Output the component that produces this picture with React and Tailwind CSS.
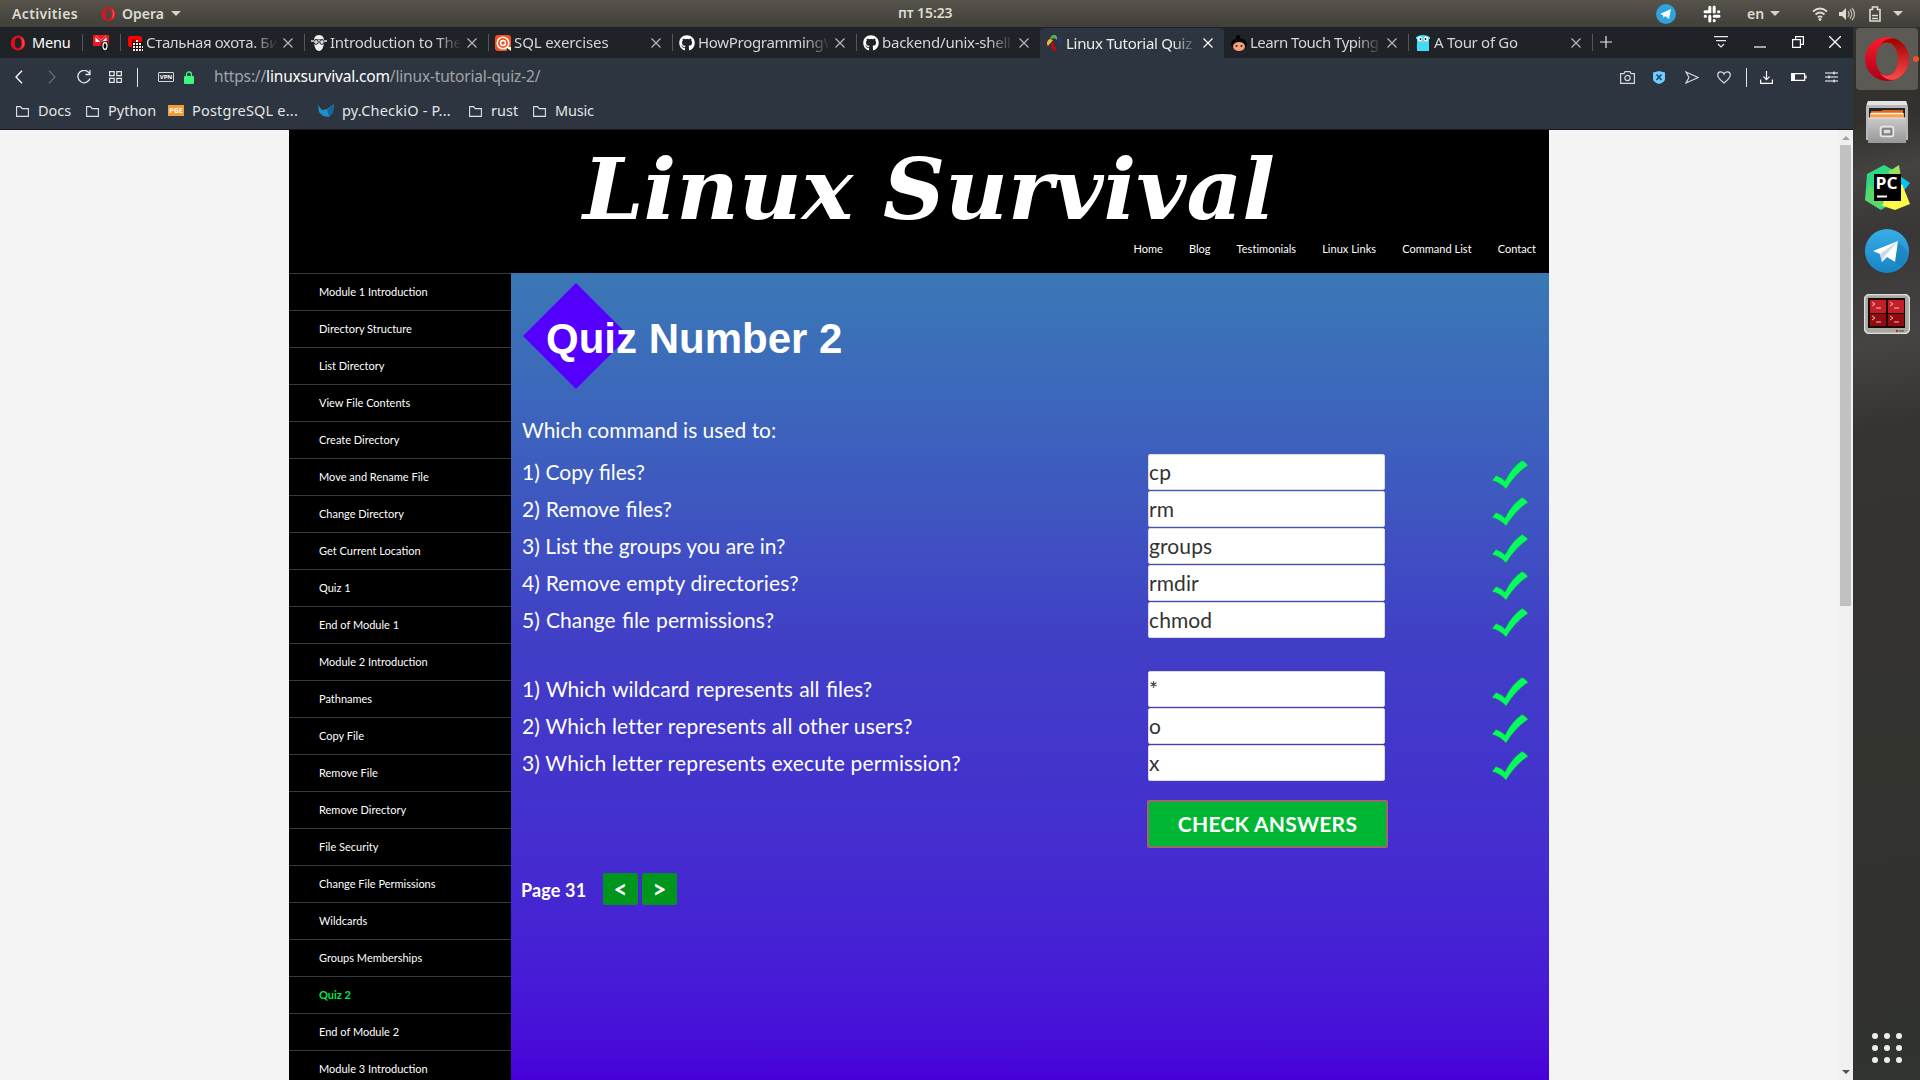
import React from "react";
import { FaGithub } from "react-icons/fa";

const UI = "font-['Noto_Sans','Open_Sans',sans-serif]";

const OperaRing = ({ className }) => (
  <svg viewBox="0 0 44 44" className={className}>
    <defs>
      <linearGradient id="ringA" x1="0" y1="0" x2="0" y2="1"><stop offset="0" stopColor="#ff1b2d" /><stop offset="1" stopColor="#a70014" /></linearGradient>
      <linearGradient id="ringB" x1="0" y1="0" x2="0" y2="1"><stop offset="0" stopColor="#9c0000" /><stop offset="1" stopColor="#ff4b4b" /></linearGradient>
    </defs>
    <path fillRule="evenodd" fill="url(#ringA)" d="M22 0a22 22 0 1 0 0 44a22 22 0 1 0 0-44M22 6c7 0 11 7 11 16s-4 16-11 16s-11-7-11-16s4-16 11-16" />
    <path fill="url(#ringB)" d="M15 8c3-4 7-7 15-6.500A22 22 0 0 1 30 42.500c-7 1.500-12-2-15-6.500c10 7 18-2 18-14s-8-21-18-14" />
  </svg>
);

const OperaMark = ({ className }) => (
  <svg viewBox="0 0 16 16" className={className}>
    <path fillRule="evenodd" fill="#e0101c" d="M8 0.500a7.300 7.500 0 1 0 0 15a7.300 7.500 0 1 0 0-15M8 2.500c2.100 0 3.200 2.300 3.200 5.500s-1.100 5.500-3.200 5.500s-3.200-2.300-3.200-5.500s1.100-5.500 3.200-5.500" />
    <path fill="#ff4a50" d="M11 2a7 7 0 0 1 0 12c2-3 2-9 0-12" />
  </svg>
);

const Close = ({ bright }) => (
  <svg viewBox="0 0 10 10" className="h-[10px] w-[10px] shrink-0"><path d="M.5.5l9 9M9.500.5l-9 9" stroke={bright ? "#fff" : "#b5b8bb"} strokeWidth="1.200" /></svg>
);

const Favs = {
  youtube: <svg viewBox="0 0 16 16" className="h-4 w-4"><rect x="1" y="1" width="14" height="11" rx="2.500" fill="#f00" /><path d="M5 4v8h4V4z" fill="#b00000" /><rect x="5" y="7" width="11" height="9" fill="#2a0d0d" /><path d="M9 6h3M6 9h8M6 12h10M6 15h10" stroke="#eee" strokeWidth="1.800" strokeDasharray="2 1" /></svg>,
  guru: <svg viewBox="0 0 16 16" className="h-4 w-4"><path d="M8 0c4 0 5 3 5 6c0 6-2 10-5 10S3 12 3 6c0-3 1-6 5-6" fill="#eee" /><path d="M4 4.500h8" stroke="#777" /><circle cx="5" cy="7" r="2.300" fill="#ddd" stroke="#222" /><circle cx="11" cy="7" r="2.300" fill="#ddd" stroke="#222" /><path d="M0 6h3M13 6h3" stroke="#ddd" strokeWidth="1.500" /></svg>,
  sql: <svg viewBox="0 0 16 16" className="h-4 w-4"><rect width="16" height="16" rx="3" fill="#f4511e" /><circle cx="8" cy="8" r="5.800" fill="none" stroke="#fff" strokeWidth="1.500" /><circle cx="8" cy="8" r="2.500" fill="none" stroke="#fff" strokeWidth="1.500" /><path d="M11 12l5 4v-4z" fill="#fff" /><path d="M12 13l3 3h-3z" fill="#222" /></svg>,
  github: <FaGithub className="h-4 w-4 text-white" />,
  linux: <svg viewBox="0 0 16 16" className="h-4 w-4"><path d="M3 3c2-4 6-4 7-1v3c-2-2-4-2-6-1z" fill="#55b054" /><path d="M3 4C0 5-1 9 1 11c1-2 3-3 5-6z" fill="#fbb03b" /><path d="M6 7c-3 3-2 7 2 9l2-3C7 12 6 10 7 7z" fill="#d50000" /><path d="M10 2c4 0 6 4 4 7l-2 1c0-3 0-4-2-6z" fill="#31317f" /></svg>,
  typing: <svg viewBox="0 0 16 16" className="h-4 w-4"><circle cx="7" cy="2" r="2" fill="#000" /><ellipse cx="8" cy="9" rx="8" ry="6" fill="#080808" /><ellipse cx="8" cy="11.500" rx="6" ry="4.500" fill="#f3a083" /><circle cx="5.500" cy="11" r="1" fill="#321" /><circle cx="10.500" cy="11" r="1" fill="#321" /></svg>,
  go: <svg viewBox="0 0 16 16" className="h-4 w-4"><path d="M1 2q7-4 14 0v2h-1v12H2V4H1z" fill="#3fdcf8" /><circle cx="5" cy="4" r="2.400" fill="#fff" /><circle cx="11" cy="4" r="2.400" fill="#fff" /><circle cx="5.500" cy="4" r=".9" fill="#111" /><circle cx="10.500" cy="4" r=".9" fill="#111" /><rect x="6.500" y="6" width="3" height="2" fill="#d8b48c" /></svg>,
};

const tabs = [
  ["youtube", "Стальная охота. Би", "tracking-[-0.35px]"],
  ["guru", "Introduction to The", "tracking-[-0.25px]"],
  ["sql", "SQL exercises", "tracking-[-0.1px]"],
  ["github", "HowProgrammingW", "tracking-[-0.3px]"],
  ["github", "backend/unix-shell", "tracking-[-0.25px]"],
  ["linux", "Linux Tutorial Quiz", "tracking-[-0.3px]"],
  ["typing", "Learn Touch Typing", "tracking-[-0.5px]"],
  ["go", "A Tour of Go", "tracking-[-0.3px]"],
];

const Folder = () => (
  <svg viewBox="0 0 13 12" className="h-3 w-[13px]"><path d="M.6 1.600h4l1.500 2h6.300v7.800H.6z" fill="none" stroke="#dfe2e4" strokeWidth="1.100" /></svg>
);

const Caret = () => <span className="h-0 w-0 border-x-[5px] border-t-[5px] border-x-transparent border-t-[#d6d2ca]" />;

const Slack = () => (
  <svg viewBox="0 0 20 20" className="ml-[26px] h-5 w-5"><g stroke="#fff" strokeWidth="3" strokeLinecap="round"><path d="M7.800 6.500V3.200M3 7.800h5M12.200 3v5M16.500 7.800h.3M12.200 12.200H17M12.200 16.800v-.3M7.800 12.200V17M3.200 12.200h.3" /></g></svg>
);

function TopBar() {
  return (
    <header className={`flex h-[27px] w-full shrink-0 items-center bg-gradient-to-b from-[#57534b] to-[#403f39] text-[14px] font-semibold text-[#dfdbd2] ${UI}`}>
      <span className="-mt-px ml-3 w-[89px] tracking-[0.35px]">Activities</span>
      <OperaMark className="h-4 w-[15px]" />
      <span className="-mt-px ml-[6px] mr-[5px] w-[44px]">Opera</span>
      <Caret />
      <span className="-mt-[2px] ml-[717px] w-[60px] whitespace-nowrap tracking-[-0.1px]">пт 15:23</span>
      <svg viewBox="0 0 20 20" className="ml-[698px] h-5 w-5"><circle cx="10" cy="10" r="10" fill="#2fa3dd" /><path d="M4 10l11-5-2 10-4-3-1.500 2L7 11z" fill="#fff" /></svg>
      <Slack />
      <span className="ml-[25px] mr-[6px] w-[17px]">en</span>
      <Caret />
      <svg viewBox="0 0 16 14" className="ml-[32px] h-[14px] w-4"><g fill="none" stroke="#dfdbd2" strokeWidth="1.700"><path d="M1 4.500q7-6 14 0M3.500 7.500q4.500-4 9 0M5.800 10.300q2.200-1.800 4.400 0" /></g><circle cx="8" cy="12.500" r="1.400" fill="#dfdbd2" /></svg>
      <svg viewBox="0 0 16 14" className="ml-[11px] h-[14px] w-4"><path d="M0 5h3l4-4v12L3 9H0z" fill="#dfdbd2" /><path d="M9 4q2 3 0 6M11 2.500q3.500 4.500 0 9M13 1q5 6 0 12" fill="none" stroke="#b5b1a9" strokeWidth="1.300" /></svg>
      <svg viewBox="0 0 12 16" className="ml-[14px] h-4 w-3"><path d="M1 3.500h2.500V1h5v2.500H11V15H1zM3 12.500h6M3 9.500h6" fill="none" stroke="#dfdbd2" strokeWidth="1.600" /></svg>
      <span className="ml-3 flex"><Caret /></span>
    </header>
  );
}

function TabBar() {
  return (
    <div className="flex h-[31px] shrink-0 items-stretch bg-[#1f2226] text-[15px] text-[#d3d5d6]">
      <div className="flex w-[82px] items-center pl-[10px] text-white"><OperaMark className="h-4 w-4" /><span className="ml-[6px] text-[14.500px] tracking-[-0.2px]">Menu</span></div>
      <div className="my-[7px] flex w-[38px] items-center border-l border-[#54575a] pl-[10px]">
        <svg viewBox="0 0 16 16" className="h-4 w-4"><rect width="16" height="11" fill="#f01820" /><path d="M2.500 0v7h11V0L8 5z" fill="#fff" /><path d="M1 0L8 6.500L15 0" fill="none" stroke="#e01018" strokeWidth="1.600" /><rect x="8.500" y="6" width="7" height="10" rx="3" fill="#111" /><ellipse cx="12" cy="11" rx="2" ry="3.500" fill="none" stroke="#eee" strokeWidth="1.300" /></svg>
      </div>
      {tabs.map(([icon, title, tracking], i) => {
        const active = i === 5;
        return (
          <div key={i} className={active ? "mt-px flex w-[184px] items-center rounded-t-[4px] bg-[#2d3640] pl-[6px] pr-[11px] text-[#eceded]" : "flex w-[184px] items-center pr-[11px]"}>
            <div className={active || i === 6 ? "h-[17px] w-px" : "h-[17px] w-px bg-[#54575a]"} />
            <div className={active ? "shrink-0" : "ml-[6px] shrink-0"}>{Favs[icon]}</div>
            <div className={`ml-[3px] w-[133px] overflow-hidden whitespace-nowrap ${tracking} [mask-image:linear-gradient(to_right,black_80%,transparent_99%)]`}>{title}</div>
            <span className="ml-auto flex"><Close bright={active} /></span>
          </div>
        );
      })}
      <div className="flex flex-1 items-center">
        <div className="h-[17px] w-px bg-[#54575a]" />
        <svg viewBox="0 0 12 12" className="-mt-[2px] ml-[7px] h-3 w-3"><path d="M6 0v12M0 6h12" stroke="#e8e9ea" strokeWidth="1.200" /></svg>
        <svg viewBox="0 0 14 12" className="-mt-px ml-[102px] h-3 w-[14px]"><path d="M0 .7h14M2 4.700h10M4 8l3 3l3-3" fill="none" stroke="#e8e9ea" strokeWidth="1.200" /></svg>
        <svg viewBox="0 0 12 12" className="-mt-px ml-[26px] h-3 w-3"><path d="M0 11h12" stroke="#fff" strokeWidth="1.200" /></svg>
        <svg viewBox="0 0 12 12" className="-mt-[2px] ml-[26px] h-3 w-3"><path d="M.6 3.600h7.800v7.800H.6zM3.600 3V.6h7.800v7.800H9" fill="none" stroke="#fff" strokeWidth="1.200" /></svg>
        <svg viewBox="0 0 12 12" className="-mt-[2px] ml-[25px] h-3 w-3"><path d="M0 0l12 12M12 0L0 12" stroke="#fff" strokeWidth="1.300" /></svg>
      </div>
    </div>
  );
}

function AddressBar() {
  return (
    <div className="flex h-[38px] shrink-0 items-center">
      <svg viewBox="0 0 8 14" className="ml-[15px] h-[14px] w-2"><path d="M7 .7L1 7l6 6.300" fill="none" stroke="#fff" strokeWidth="1.300" /></svg>
      <svg viewBox="0 0 8 14" className="ml-[25px] h-[14px] w-2"><path d="M1 .7L7 7l-6 6.300" fill="none" stroke="#646c74" strokeWidth="1.300" /></svg>
      <svg viewBox="0 0 14 14" className="ml-[21px] h-[14px] w-[14px]"><path d="M12.500 3.500A6.200 6.200 0 1 0 13 8.500M13 0v4.500H8.500" fill="none" stroke="#e4e6e7" strokeWidth="1.300" /></svg>
      <svg viewBox="0 0 13 12" className="ml-[18px] h-3 w-[13px]"><path d="M.6.6h4.600v4H.6zM7.800.6h4.600v4H7.800zM.6 7.400h4.600v4H.6zM7.800 7.400h4.600v4H7.800z" fill="none" stroke="#e4e6e7" strokeWidth="1.200" /></svg>
      <div className="ml-[15px] h-[19px] w-px bg-[#e4e6e7]" />
      <div className="ml-[20px] flex h-[10px] w-[16px] items-center justify-center rounded-[1px] border border-[#d5d8da] text-[6px] font-bold leading-none text-white">VPN</div>
      <svg viewBox="0 0 10 13" className="ml-[10px] h-[13px] w-[10px]"><path d="M2.500 6V3.500q0-2.500 2.500-2.500t2.500 2.500V6" fill="none" stroke="#3df57f" strokeWidth="1.300" /><rect y="5" width="10" height="8" rx="1" fill="#3df57f" /></svg>
      <div className="ml-[20px] w-[340px] whitespace-nowrap text-[15.500px] tracking-[-0.17px] text-[#9fa4a9]">https://<span className="text-white">linuxsurvival.com</span>/linux-tutorial-quiz-2/</div>
      <div className="ml-auto mr-[15px] flex items-center">
        <svg viewBox="0 0 15 13" className="h-[13px] w-[15px]"><path d="M.6 2.600h3.400l1-2h5l1 2h3.400v9.800H.6z" fill="none" stroke="#d5d8da" strokeWidth="1.200" /><circle cx="7.500" cy="7" r="2.600" fill="none" stroke="#d5d8da" strokeWidth="1.200" /></svg>
        <svg viewBox="0 0 12 13" className="ml-[18px] h-[13px] w-3"><path d="M0 1.500L6 0l6 1.500V8q0 3-6 5Q0 11 0 8z" fill="#6fcdff" /><path d="M3.500 3.500l5 5.500M8.500 3.500l-5 5.500" stroke="#1b4a66" strokeWidth="1.600" /></svg>
        <svg viewBox="0 0 14 13" className="ml-[20px] h-[13px] w-[14px]"><path d="M1 1l12 5.500L1 12l3-5.500z" fill="none" stroke="#d5d8da" strokeWidth="1.200" /></svg>
        <svg viewBox="0 0 14 13" className="ml-[18px] h-[13px] w-[14px]"><path d="M7 12C2 8 .7 6 .7 4C.7 0 6 0 7 3C8 0 13.300 0 13.300 4C13.300 6 12 8 7 12z" fill="none" stroke="#d5d8da" strokeWidth="1.200" /></svg>
        <div className="ml-[15px] h-[19px] w-px bg-[#e4e6e7]" />
        <svg viewBox="0 0 13 13" className="ml-[13px] h-[13px] w-[13px]"><path d="M.6 8.500v3.800h11.800V8.500M6.500 0v8.500M3.500 5.700l3 3l3-3" fill="none" stroke="#fff" strokeWidth="1.200" /></svg>
        <svg viewBox="0 0 16 8" className="ml-[18px] h-2 w-4"><path d="M.6.6h13v6.800H.6zM15 2.500v3" fill="none" stroke="#fff" strokeWidth="1.200" /><path d="M1 1h3v6H1z" fill="#fff" /></svg>
        <svg viewBox="0 0 13 12" className="ml-[18px] h-3 w-[13px]"><path d="M0 2h13M0 6h13M0 10h13M9 .5v3M4 4.500v3M9 8.500v3" stroke="#fff" strokeWidth="1.100" /></svg>
      </div>
    </div>
  );
}

function Bookmarks() {
  return (
    <div className="flex h-[33px] shrink-0 items-center whitespace-nowrap pb-[4px] pl-4 text-[14.500px] text-[#e3e5e6]">
      <Folder /><span className="ml-[9px] w-[48px]">Docs</span>
      <Folder /><span className="ml-[9px] w-[60px]">Python</span>
      <span className="flex h-[11px] w-4 items-center justify-center bg-[#f49b35] text-[7px] font-bold leading-none text-white">PGE</span>
      <span className="ml-2 w-[126px] tracking-[0.2px]">PostgreSQL e...</span>
      <svg viewBox="0 0 16 14" className="h-[14px] w-4"><path d="M0 1l4 5l5-1l7-5l-1 8l-4 5l-6-1l-4-4z" fill="#1f8fc6" /><path d="M9 6l7-6l-1 9l-4 3z" fill="#126a9a" /></svg>
      <span className="ml-2 w-[127px] tracking-[0.2px]">py.CheckiO - P...</span>
      <Folder /><span className="ml-[9px] w-[42px]">rust</span>
      <Folder /><span className="ml-[9px] tracking-[-0.2px]">Music</span>
    </div>
  );
}

const menu = ["Module 1 Introduction", "Directory Structure", "List Directory", "View File Contents", "Create Directory", "Move and Rename File", "Change Directory", "Get Current Location", "Quiz 1", "End of Module 1", "Module 2 Introduction", "Pathnames", "Copy File", "Remove File", "Remove Directory", "File Security", "Change File Permissions", "Wildcards", "Groups Memberships", "Quiz 2", "End of Module 2", "Module 3 Introduction"];

const first = [
  ["1) Copy files?", "cp", "[word-spacing:0.3px]"],
  ["2) Remove files?", "rm", "[word-spacing:0.5px]"],
  ["3) List the groups you are in?", "groups", ""],
  ["4) Remove empty directories?", "rmdir", "tracking-[0.16px]"],
  ["5) Change file permissions?", "chmod", "[word-spacing:0.8px]"],
];
const second = [
  ["1) Which wildcard represents all files?", "*", "[word-spacing:1px]"],
  ["2) Which letter represents all other users?", "o", "tracking-[0.17px]"],
  ["3) Which letter represents execute permission?", "x", "tracking-[0.16px]"],
];

const Row = ({ q, a, fit }) => (
  <div className="flex h-[37px] items-start">
    <span className={`w-[626px] leading-[36px] ${fit}`}>{q}</span>
    <div className="h-9 w-[237px] rounded-[2px] border border-[#dcdcdc] bg-white text-[21px] leading-[34px] tracking-[0.1px] text-[#333]">{a}</div>
    <svg viewBox="0 0 36 30" className="ml-[107px] mt-[6px] h-[30px] w-9"><path d="M0 20.500L4 15.500Q9 17 13 21Q20 7 30 .5Q34 2 36 5.500Q24 13 14 29Q8 22 0 20.500z" fill="#05fb5e" stroke="#258a5c" strokeWidth=".6" /></svg>
  </div>
);

function Page() {
  return (
    <div className="flex min-h-0 flex-1 bg-[#f4f4f4] pl-[289px] font-['Lato',sans-serif]">
      <div className="flex w-[1260px] flex-col bg-black text-white">
        <div className="flex h-[143px] shrink-0 flex-col">
          <svg viewBox="0 0 1260 100" className="h-[100px] w-full"><text x="294" y="89" textLength="692" lengthAdjust="spacingAndGlyphs" fill="#fff" className="font-['DejaVu_Serif',serif] text-[84px] font-bold italic">Linux Survival</text></svg>
          <nav className="flex justify-end pr-[13px] pt-[10px] text-[11px] leading-[18px] tracking-[0.03px]">
            {["Home", "Blog", "Testimonials", "Linux Links", "Command List", "Contact"].map((t) => <span key={t} className="ml-[26px]">{t}</span>)}
          </nav>
        </div>
        <div className="flex min-h-0 flex-1 overflow-hidden">
          <aside className="w-[222px] shrink-0">
            {menu.map((t) => (
              <div key={t} className={t === "Quiz 2" ? "h-[37px] border-t border-[#3a3a3a] pl-[30px] text-[11px] font-bold leading-[36px] text-[#05e84e]" : "h-[37px] border-t border-[#3a3a3a] pl-[30px] text-[11px] leading-[36px]"}>{t}</div>
            ))}
          </aside>
          <main className="flex-1 bg-gradient-to-b from-[#3a78b5] via-[#413fc6] via-45% to-[#4800da] pl-[11px] text-[21px]">
            <div className="flex h-[131px] items-start">
              <svg viewBox="0 0 106 106" className="ml-px mt-[10px] h-[106px] w-[106px]"><path d="M53 0l53 53l-53 53L0 53z" fill="#5500ff" /></svg>
              <h1 className="relative z-10 -ml-[83px] font-['Liberation_Sans',sans-serif] text-[42px] font-bold leading-[131px]">Quiz Number 2</h1>
            </div>
            <div className="mt-[8px] h-[42px] leading-[36px]">Which command is used to:</div>
            {first.map(([q, a, fit]) => <Row key={q} q={q} a={a} fit={fit} />)}
            <div className="h-[32px]" />
            {second.map(([q, a, fit]) => <Row key={q} q={q} a={a} fit={fit} />)}
            <div className="ml-[625px] mt-[18px] flex h-12 w-[241px] items-center justify-center rounded-[2px] border-2 border-[#9a6a67] bg-[#00b733] font-bold tracking-[0.27px]">CHECK ANSWERS</div>
            <div className="-ml-px mt-[25px] flex items-center text-[18px] font-bold"><span className="w-[82px] pt-[3px] tracking-[0.15px]">Page 31</span>
              <span className="flex h-8 w-[35px] items-center justify-center rounded-[2px] bg-[#00951d] text-[24px]">&lt;</span>
              <span className="ml-1 flex h-8 w-[35px] items-center justify-center rounded-[2px] bg-[#00951d] text-[24px]">&gt;</span>
            </div>
          </main>
        </div>
      </div>
      <div className="flex-1" />
      <div className="flex w-[15px] flex-col items-center bg-[#f0f0f0]">
        <span className="mt-[6px] h-0 w-0 border-x-[4px] border-b-[4px] border-x-transparent border-b-[#a3a3a3]" />
        <span className="mt-[5px] h-[461px] w-[11px] bg-[#c1c1c1]" />
        <span className="mb-[6px] mt-auto h-0 w-0 border-x-[4px] border-t-[4px] border-x-transparent border-t-[#505050]" />
      </div>
    </div>
  );
}

function Dock() {
  return (
    <aside className="flex w-[67px] shrink-0 flex-col items-center bg-[#34322f] bg-[linear-gradient(170deg,#33312e_0%,#33312e_9%,#454340_14%,#383735_20%,#454442_30%,#353432_38%,#33322e_55%,#31332e_100%)]">
      <div className="relative mt-px flex h-[62px] w-[62px] items-center justify-center rounded-[4px] bg-[#5b5a55]">
        <OperaRing className="h-11 w-11" />
        <span className="absolute -right-px top-[28px] h-[6px] w-[6px] rounded-full bg-[#e95420]" />
      </div>
      <svg viewBox="0 0 42 44" className="mt-[10px] h-11 w-[42px]">
        <defs><linearGradient id="cab" x1="0" y1="0" x2="0" y2="1"><stop offset="0" stopColor="#c9c9c9" /><stop offset="1" stopColor="#979797" /></linearGradient></defs>
        <path d="M2 1h38l2 6v33H0V7z" fill="#b8b8b8" /><path d="M2 1h38l1.500 4h-41z" fill="#e3e3e3" /><rect x="3" y="8" width="36" height="11" fill="#252525" /><path d="M5 11h10l2-1h20v9H5z" fill="#d9671d" /><path d="M4 13h34v6H4z" fill="#f5a54b" /><path d="M5 13.500h32" stroke="#fff0dc" strokeWidth="1.500" /><path d="M2 18h38v25H2z" fill="url(#cab)" /><path d="M2 18h38" stroke="#e5e5e5" /><rect x="14.500" y="26.500" width="13" height="10" rx="2" fill="none" stroke="#e8e8e8" strokeWidth="1.500" /><rect x="17" y="29" width="8" height="5" fill="#ddd" stroke="#555" />
      </svg>
      <svg viewBox="0 0 46 46" className="mt-5 h-[46px] w-[46px]"><path d="M3 10L20 1l13 7v28L17 46L1 36z" fill="#2fd884" /><path d="M24 8L35 1l3 18z" fill="#9be15c" /><path d="M36 12l10 7l-7 9z" fill="#07c3f2" /><path d="M38 20l8 20l-15 6l-18-6l10-8z" fill="#fcf84a" /><path d="M1 36L5 20l15 18l-4 7z" fill="#5ad96b" /><rect x="10" y="10" width="27" height="27" fill="#000" /><text x="11.500" y="25" textLength="22" lengthAdjust="spacingAndGlyphs" fill="#fff" className="font-['Open_Sans',sans-serif] text-[16px] font-bold">PC</text><path d="M13 32.500h10" stroke="#fff" strokeWidth="2" /></svg>
      <svg viewBox="0 0 44 44" className="mt-[19px] h-11 w-11"><defs><linearGradient id="tg" x1="0" y1="0" x2="0" y2="1"><stop offset="0" stopColor="#38aee6" /><stop offset="1" stopColor="#1684c4" /></linearGradient></defs><circle cx="22" cy="22" r="22" fill="url(#tg)" /><path d="M33 12L44 24l-7 14l-12-6z" fill="#1579b4" opacity=".5" /><path d="M8 22L33 12l-3 21l-8-5l-5 5l-2-8z" fill="#fff" /><path d="M15 25l18-13l-14 16l-2 5z" fill="#c8daea" /></svg>
      <svg viewBox="0 0 46 40" className="mt-[21px] h-10 w-[46px]"><rect x=".5" y=".5" width="45" height="39" rx="5" fill="#a9a9a4" stroke="#deded9" strokeWidth="1.500" /><rect x="4" y="4" width="37" height="30" fill="#210606" /><path d="M6 6h16v13H6zM24 6h16v13H24z" fill="#c31f26" /><path d="M6 20h16v12H6zM24 20h16v12H24z" fill="#8f0d12" /><path d="M8 8l3 2l-3 2M12 14h5M26 8l3 2l-3 2M30 14h5M8 22l3 2l-3 2M12 28h5M26 22l3 2l-3 2M30 28h5" fill="none" stroke="#f4b9b9" /><circle cx="33" cy="37" r="1.200" fill="#e11" /><path d="M35 37h5" stroke="#777" strokeWidth="2" /></svg>
      <div className="mb-[17px] mt-auto grid grid-cols-3 gap-[6px]">{Array.from({ length: 9 }, (_, i) => <span key={i} className="h-[6px] w-[6px] rounded-full bg-[#eeeeec]" />)}</div>
    </aside>
  );
}

export default function App() {
  return (
    <div className="flex h-[1080px] w-[1920px] flex-col overflow-hidden">
      <TopBar />
      <div className="flex min-h-0 flex-1">
        <div className="flex w-[1853px] flex-col">
          <div className={`flex h-[103px] shrink-0 flex-col border-b border-[#171b20] bg-[#2d3640] ${UI}`}>
            <TabBar />
            <AddressBar />
            <Bookmarks />
          </div>
          <Page />
        </div>
        <Dock />
      </div>
    </div>
  );
}
